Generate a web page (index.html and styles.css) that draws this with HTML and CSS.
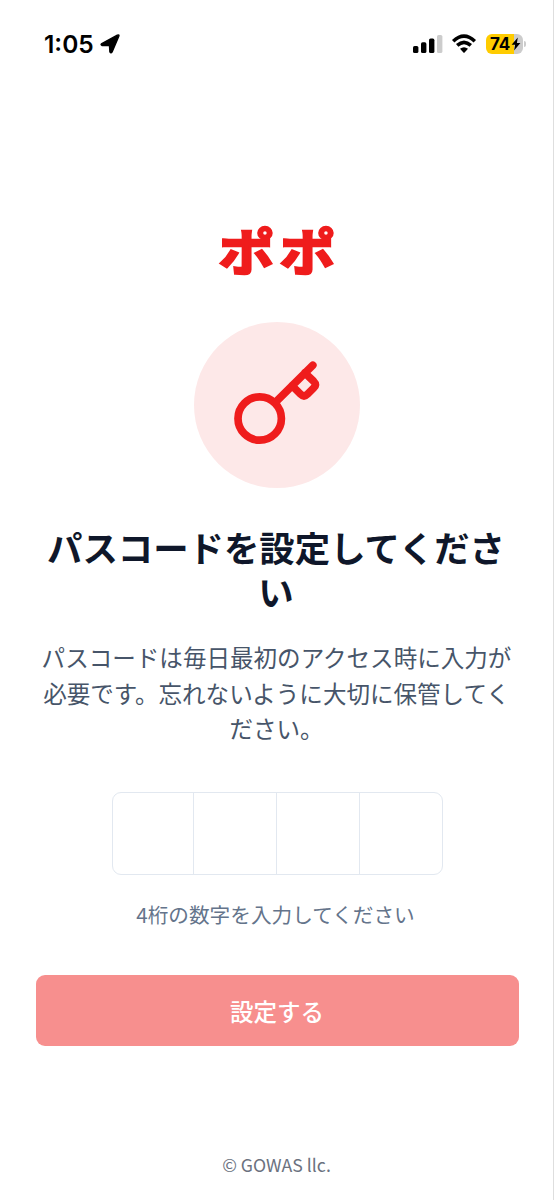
FILE: index.html
```html
<!DOCTYPE html>
<html lang="ja">
<head>
<meta charset="utf-8">
<title>パスコード設定</title>
<link rel="stylesheet" href="styles.css">
</head>
<body>
<div class="screen">
  <header class="status">
    <div class="status-left">
      <span class="time">1:05</span>
      <svg class="location" width="20" height="20" viewBox="0 0 20 20"><path d="M1.8 9.6 17.3 1.2Q19.6.2 18.7 2.5L12.1 17.9Q11 19.7 9.9 17.9L9.5 12Q9.4 11.4 8.8 11.4L2.2 11.6Q.2 10.8 1.8 9.6Z" fill="#000" stroke="#000" stroke-width="1.4" stroke-linejoin="round"/></svg>
    </div>
    <div class="status-right">
      <svg class="signal" width="30" height="20" viewBox="0 0 30 20"><rect x="0" y="12" width="5.4" height="7" rx="1.6"/><rect x="8" y="8.3" width="5.4" height="10.7" rx="1.6"/><rect x="16" y="4.6" width="5.4" height="14.4" rx="1.6"/><rect x="24" y="1" width="5.4" height="18" rx="1.6" fill="#ccc"/></svg>
      <svg class="wifi" width="26" height="20" viewBox="0 0 26 20"><path d="M2.2 7.2Q13-2.8 23.8 7.2M6.2 11.4Q13 5.2 19.8 11.4" fill="none" stroke="#000" stroke-width="3.6"/><path d="M9 14.8Q13 11.6 17 14.8L13.6 18.4Q13 19 12.4 18.4Z"/></svg>
      <div class="battery">
        <span class="level">74</span>
        <svg class="bolt" width="10" height="14" viewBox="0 0 10 14"><path d="M6.8.5.6 7.8H4.1L3.1 13.5 9.4 6H5.9Z"/></svg>
      </div>
      <span class="nub"></span>
    </div>
  </header>
  <main class="content">
    <div class="logo">ポポ</div>
    <div class="key-circle">
      <svg width="166" height="166" viewBox="0 0 166 166" fill="none" stroke="#ef1c1c" stroke-width="7.7" stroke-linecap="round" stroke-linejoin="round"><circle cx="65.7" cy="96.5" r="21.7"/><path d="M82.5 79.2 118.8 43.3M98 63.6 106.5 72.1Q110 75.6 113.5 72.1L119.5 66.1Q123 62.6 119.5 59.1L110.7 50.8"/></svg>
    </div>
    <h1 class="title">パスコードを設定してください</h1>
    <p class="lead">パスコードは毎日最初のアクセス時に入力が必要です。忘れないように大切に保管してください。</p>
    <div class="pin"><span class="cell"></span><span class="cell"></span><span class="cell"></span><span class="cell"></span></div>
    <p class="hint">4桁の数字を入力してください</p>
    <button class="submit" type="button">設定する</button>
  </main>
  <footer class="footer">© GOWAS llc.</footer>
</div>
</body>
</html>
```
FILE: styles.css
```css
* { box-sizing: border-box; }
body { margin: 0; background: #fff; font-family: "Noto Sans CJK JP", sans-serif; }
.screen { width: 554px; height: 1200px; display: flex; flex-direction: column; border-right: 1px solid #dedede; overflow: hidden; }
.status { height: 88px; padding: 0 27px 0 43px; display: flex; justify-content: space-between; align-items: center; }
.status-left, .status-right { display: flex; align-items: center; }
.time { font: 600 24.5px/30px Inter, sans-serif; width: 57px; padding-left: 1px; }
.signal { margin-right: 8px; }
.wifi { margin-right: 9px; }
.battery { width: 37px; height: 20px; border-radius: 6px; background: linear-gradient(90deg, #fc0 0 28px, #ccc 28px); display: flex; align-items: center; padding-left: 4px; }
.level { font: 700 17px/20px Inter, sans-serif; letter-spacing: -.2px; width: 21px; }
.nub { width: 2px; height: 6px; margin-left: 1px; border-radius: 0 2px 2px 0; background: #ccc; }
.content { padding: 0 35px 0 36px; display: flex; flex-direction: column; align-items: center; }
.logo { margin-top: 126px; height: 70px; font-size: 56px; line-height: 70px; font-weight: 700; color: #ef1c1c; letter-spacing: 5px; padding-left: 5px; -webkit-text-stroke: 2.6px #ef1c1c; transform: scaleY(.9); }
.key-circle { margin-top: 38px; width: 166px; height: 166px; border-radius: 50%; background: #fde8e8; }
.key-circle svg { display: block; }
.title { margin: 37px 2px 0 0; font-size: 35.4px; line-height: 44.2px; font-weight: 700; color: #0f172a; text-align: center; width: 470px; }
.lead { margin: 27px 1px 0 0; font-size: 23.55px; line-height: 35.4px; color: #475569; text-align: center; width: 478px; }
.pin { margin-top: 45px; width: 331px; height: 83px; display: grid; grid-template-columns: 80.5px 83px 82.5px 1fr; border: 1.5px solid #e2e8f0; border-radius: 9px; }
.cell + .cell { border-left: 1.5px solid #e2e8f0; }
.hint { margin: 24px 3px 0 0; font-size: 20.65px; line-height: 30px; color: #64748b; }
.submit { margin: 46px 0 0 0; width: 483px; height: 71px; padding-top: 3px; border: 0; border-radius: 9px; background: #f78f8e; color: #fff; font: 500 23.5px/35px "Noto Sans CJK JP", sans-serif; }
.footer { margin-top: auto; padding-bottom: 21px; font-size: 17.7px; line-height: 30px; color: #6b7280; text-align: center; }
```
